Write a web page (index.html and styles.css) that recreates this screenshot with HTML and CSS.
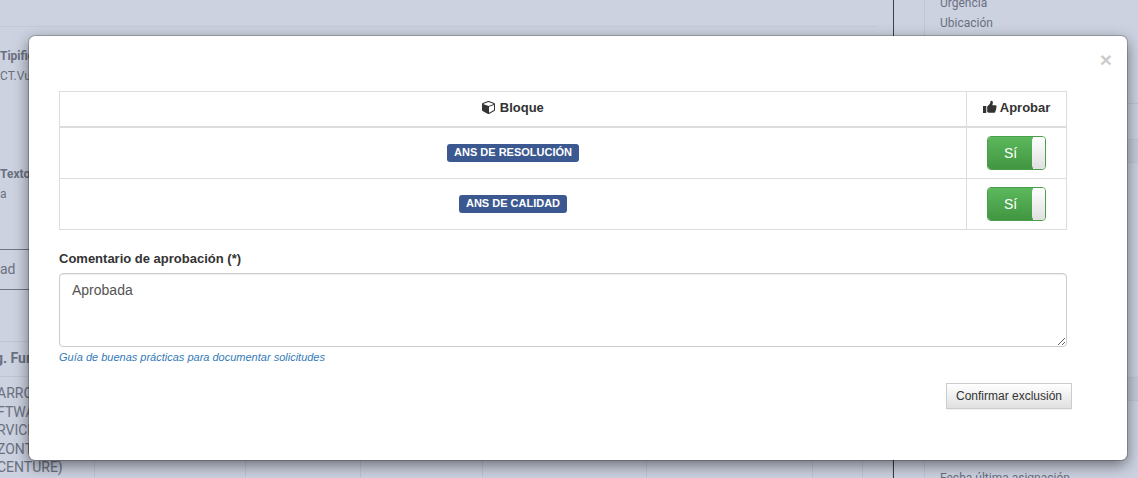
FILE: index.html
```html
<!DOCTYPE html>
<html lang="es">
<head>
<meta charset="utf-8">
<title>Aprobar</title>
<link rel="stylesheet" href="styles.css">
</head>
<body>
<div class="page">
  <main class="main">
    <div class="top-band"></div>
    <div class="field field-first">
      <div class="field-title">Tipificación</div>
      <div class="field-value">CT.Vulnerabilidad</div>
    </div>
    <div class="field field-second">
      <div class="field-title">Texto</div>
      <div class="field-value">a</div>
    </div>
    <div class="dark-row">ad</div>
    <div class="head-row"><span class="head-text">g. Funcional</span></div>
    <div class="grid-row">
      <div class="cell"><div class="shifted">ARROLLO<br>FTWARE<br>RVICIOS<br>ZONTAL<br>CENTURE)</div></div>
      <div class="cell"></div><div class="cell"></div><div class="cell"></div>
      <div class="cell"></div><div class="cell"></div><div class="cell"></div><div class="cell"></div>
    </div>
  </main>
  <aside class="side">
    <div class="side-gutter"></div>
    <div class="side-body">
      <div class="side-top">
        <div>Urgencia</div>
        <div>Ubicación</div>
      </div>
      <div class="side-row"></div>
      <div class="side-band"></div>
      <div class="side-mid"><span>Solicitud</span></div>
      <div class="side-row"></div>
      <div class="side-band"></div>
      <div class="side-last">Fecha última asignación</div>
    </div>
  </aside>
</div>

<section class="modal">
  <button class="close" type="button">×</button>
  <table class="blocks">
    <thead>
      <tr>
        <th>
          <svg class="icon" viewBox="0 0 1792 1792"><path d="M896 1629l640-349v-636l-640 233v752zm-64-865l698-254-698-254-698 254zm832-252v768q0 35-18 65t-49 47l-704 384q-28 16-61 16t-61-16l-704-384q-31-17-49-47t-18-65v-768q0-40 23-73t61-47l704-256q22-8 44-8t44 8l704 256q38 14 61 47t23 73z"/></svg>
          Bloque
        </th>
        <th class="col-approve">
          <svg class="icon" viewBox="0 0 15 14"><path d="M0 6h3.5v7.500H0zM4.500 6.500L7 4Q8 3 8 1.200Q8 .2 9 .2Q11 .2 10.500 3L10 5h3Q14.600 5 14.600 6.500Q14.600 7.500 14 8Q14.600 9 13.800 10Q14 11 13.200 11.700Q13.200 13.200 12 13.200H8Q6 13.200 4.500 12.300z"/></svg>
          Aprobar
        </th>
      </tr>
    </thead>
    <tbody>
      <tr>
        <td><span class="tag">ANS DE RESOLUCIÓN</span></td>
        <td class="col-approve"><span class="switch"><span class="switch-on">Sí</span><span class="switch-handle"></span></span></td>
      </tr>
      <tr>
        <td><span class="tag">ANS DE CALIDAD</span></td>
        <td class="col-approve"><span class="switch"><span class="switch-on">Sí</span><span class="switch-handle"></span></span></td>
      </tr>
    </tbody>
  </table>
  <label class="comment-label" for="comment">Comentario de aprobación (*)</label>
  <textarea class="comment" id="comment">Aprobada</textarea>
  <a class="guide" href="#">Guía de buenas prácticas para documentar solicitudes</a>
  <div class="actions"><button class="confirm" type="button">Confirmar exclusión</button></div>
</section>
</body>
</html>
```
FILE: styles.css
```css
* { box-sizing: border-box; }
html, body { margin: 0; height: 478px; overflow: hidden; }
body { font-family: Roboto, "Liberation Sans", sans-serif; font-size: 12px; line-height: 18.5px; color: #6b7080; background: #ccd2e0; }

.page { display: flex; height: 478px; overflow: hidden; }
.main { width: 894px; flex: none; border-right: 1px solid #3c4048; overflow: hidden; font-size: 14px; }
.top-band { height: 27px; margin-right: 15px; border-bottom: 1px solid #c3c9d6; }
.field-first { padding-top: 20px; height: 118px; }
.field-second { padding-top: 20px; height: 104px; }
.field-title { font-weight: 700; margin-bottom: 1px; font-size: 12px; }
.field-value { font-size: 12px; white-space: nowrap; }
.shifted { margin-left: -3px; white-space: nowrap; }
.dark-row { height: 41px; border-top: 1px solid #6f7482; border-bottom: 1px solid #6f7482; line-height: 38px; }
.head-row { margin-top: 51px; height: 36px; border-top: 1px solid #bfc5d2; border-bottom: 1px solid #bfc5d2; font-weight: 700; line-height: 33px; overflow: hidden; }
.head-text { display: block; margin-left: -5px; white-space: nowrap; }
.grid-row { display: grid; grid-template-columns: 95px 151px 115px 122px 164px 166px 50px 30px; padding-top: 7px; height: 110px; }
.cell { border-right: 1px solid #bfc5d2; margin-top: -7px; padding-top: 7px; white-space: nowrap; min-width: 0; }

.side { flex: 1; display: flex; }
.side-gutter { width: 31px; border-right: 1px solid #bfc5d2; }
.side-body { flex: 1; }
.side-top { height: 110px; padding-left: 15px; margin-top: -6px; border-bottom: 1px solid #bfc5d2; }
.side-top div { margin-bottom: 1px; }
.side-row { height: 36px; border-bottom: 1px solid #bfc5d2; }
.side-band { height: 23px; background: #c5cbd9; border-bottom: 1px solid #bfc5d2; }
.side-mid { height: 179px; padding-left: 146px; padding-top: 52px; white-space: nowrap; }
.side-last { padding: 68px 0 0 15px; white-space: nowrap; }

.modal {
  position: absolute; left: 29px; top: 36px; width: 1098px; height: 424px;
  padding: 55px 60px 0 30px;
  background: #fff; border-radius: 6px;
  box-shadow: 0 0 0 1px rgba(0,0,0,.2), 0 5px 15px rgba(0,0,0,.5);
  font-family: "Liberation Sans", Arial, sans-serif; color: #333; font-size: 13px;
}
.close {
  position: absolute; right: 15px; top: 13px; padding: 0; border: 0; background: none;
  font: 700 21px/1 "Liberation Sans", sans-serif; color: #000; opacity: .2; cursor: pointer;
}

.blocks { width: 1008px; border-collapse: collapse; table-layout: fixed; }
.blocks th, .blocks td { border: 1px solid #ddd; text-align: center; padding: 8px; vertical-align: middle; }
.blocks th { padding: 7px 8px 9px; font-size: 13px; line-height: 18px; border-bottom-width: 2px; font-weight: 700; color: #333; }
.blocks td { height: 50px; }
.col-approve { width: 100px; }
.icon { width: 14px; height: 14px; fill: #333; vertical-align: -2px; }

.tag { display: inline-block; padding: 2px 7px 4px; border-radius: 3px; background: #3b5890; color: #fff; font-weight: 700; font-size: 11px; line-height: 12px; vertical-align: middle; }

.switch { display: flex; width: 59px; height: 34px; margin: 0 auto; border: 1px solid #4a9d4a; border-radius: 4px; overflow: hidden; background: #fff; }
.switch-on { flex: 1; display: flex; align-items: center; justify-content: center; color: #fff; font-size: 14px; background: linear-gradient(#5cb85c, #419641); }
.switch-handle { width: 13px; background: linear-gradient(#fff, #e0e0e0); border-radius: 4px 0 0 4px; margin-left: -1px; }

.comment-label { display: block; margin-top: 20px; font-weight: 700; font-size: 13px; line-height: 18px; }
.comment {
  display: block; width: 1008px; height: 74px; margin-top: 5px; padding: 6px 12px;
  border: 1px solid #ccc; border-radius: 4px; resize: vertical;
  font: 14px/20px "Liberation Sans", sans-serif; color: #555;
  box-shadow: inset 0 1px 1px rgba(0,0,0,.075);
}
.guide { display: block; margin-top: 3px; font-size: 11px; line-height: 15px; font-style: italic; color: #337ab7; text-decoration: none; }

.actions { display: flex; justify-content: flex-end; margin: 18px -5px 0 0; }
.confirm { width: 126px; height: 26px; padding: 0; border: 1px solid #ccc; border-radius: 0; background: linear-gradient(#fff, #e0e0e0); font: 12px "Liberation Sans", sans-serif; color: #333; box-shadow: 0 1px 0 rgba(0,0,0,.05); }
```
